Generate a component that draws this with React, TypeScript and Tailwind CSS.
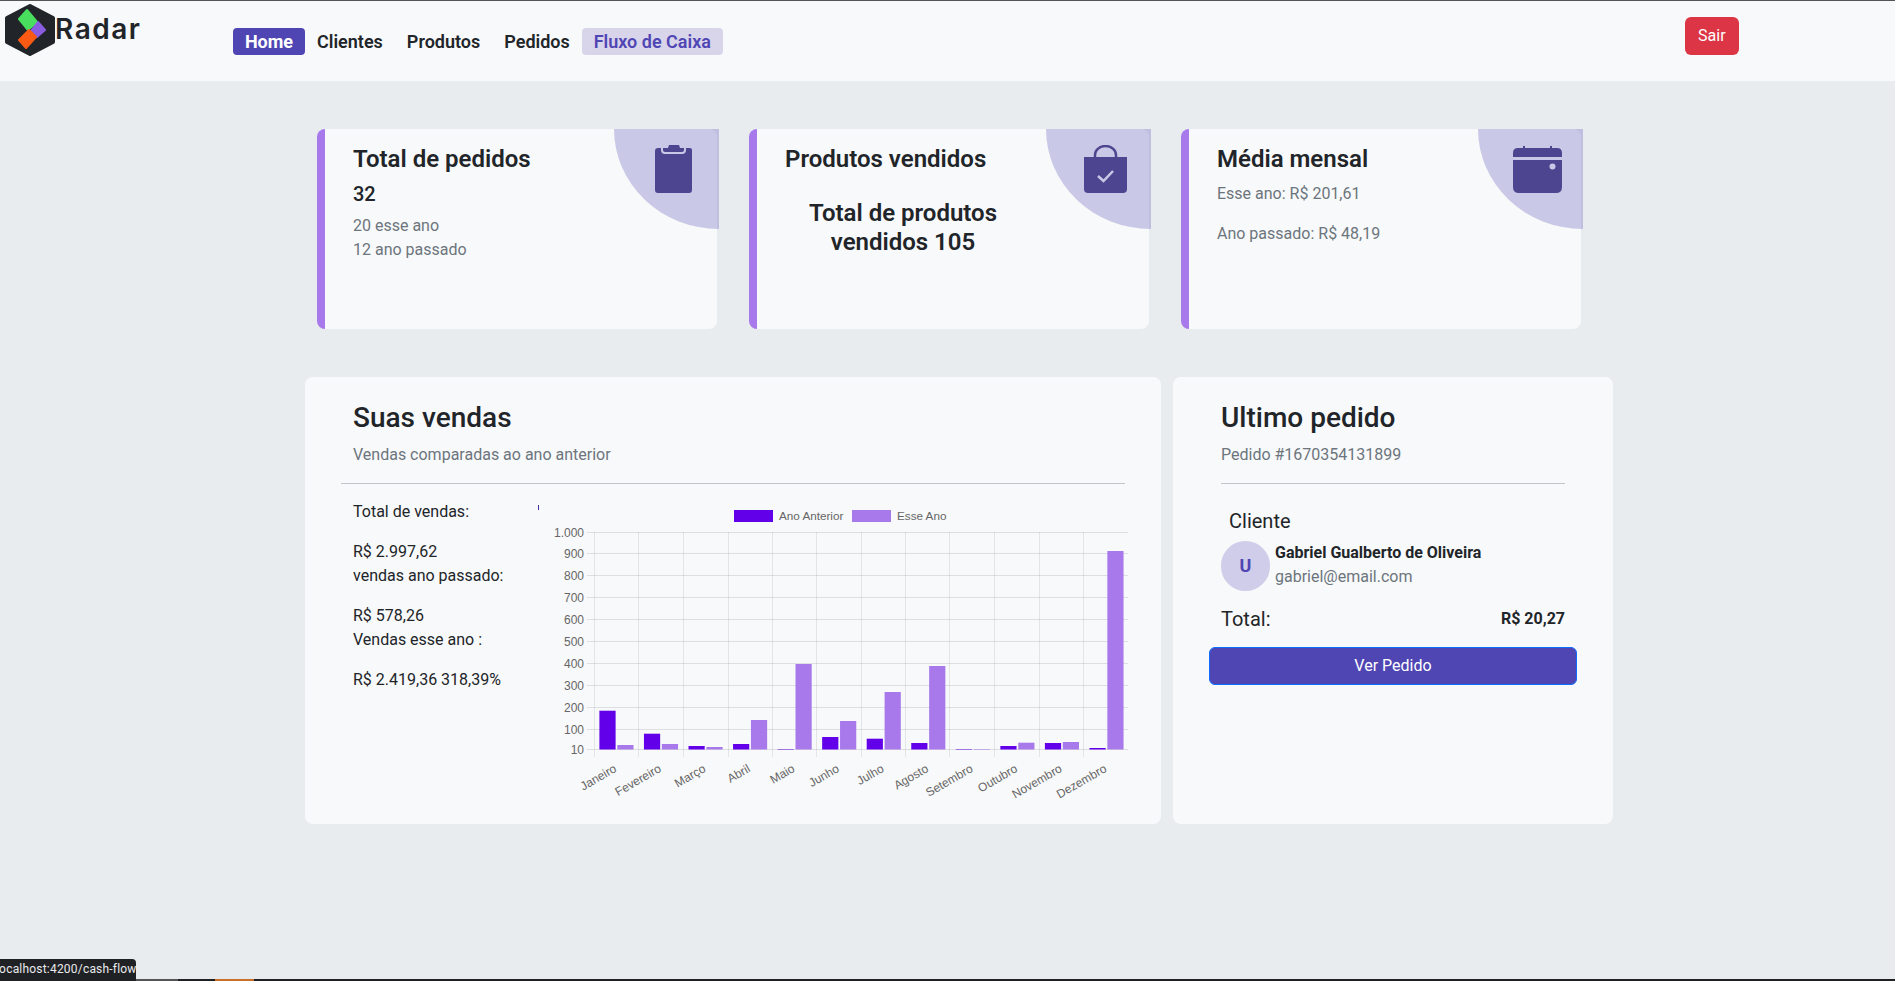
const months = ["Janeiro", "Fevereiro", "Março", "Abril", "Maio", "Junho", "Julho", "Agosto", "Setembro", "Outubro", "Novembro", "Dezembro"];
// top of each bar, in screenshot pixels
const lastYear = [710.7, 733.7, 746, 744, 749, 737, 738.7, 743, 749, 746, 743, 748];
const thisYear = [745, 744, 747, 720, 664, 721, 692, 666, 749, 742.7, 742, 551];
const yTicks = [
  { label: "1.000", y: 532.5 },
  { label: "900", y: 553.5 },
  { label: "800", y: 575.5 },
  { label: "700", y: 597.5 },
  { label: "600", y: 619.5 },
  { label: "500", y: 641.5 },
  { label: "400", y: 663.5 },
  { label: "300", y: 685.5 },
  { label: "200", y: 707.5 },
  { label: "100", y: 729.5 },
  { label: "10", y: 749.5 },
];
const xGrid = [594.5, 638.5, 683.5, 728.5, 772.5, 816.5, 861.5, 905.5, 949.5, 994.5, 1039.5, 1083.5];
const barBase = 749.5;

function SalesChart() {
  return (
    <svg viewBox="530 490 610 310" className="w-[610px] h-[310px] shrink-0">
      <rect x="538" y="505" width="1" height="5" fill="#4b2a9e" />
      <rect x="734" y="510" width="39" height="12" fill="#6200ea" />
      <text x="779" y="520" fontSize="11.7" fill="#666" fontFamily="Liberation Sans">Ano Anterior</text>
      <rect x="852" y="510" width="39" height="12" fill="#a779ea" />
      <text x="897" y="520" fontSize="11.7" fill="#666" fontFamily="Liberation Sans">Esse Ano</text>
      {yTicks.map((tick) => (
        <g key={tick.label}>
          <line x1="587" x2="1128" y1={tick.y} y2={tick.y} stroke="#000" strokeOpacity="0.1" />
          <text x="584" y={tick.y + 4.5} textAnchor="end" fontSize="12" fill="#666" fontFamily="Liberation Sans">
            {tick.label}
          </text>
        </g>
      ))}
      {xGrid.map((x) => (
        <line key={x} x1={x} x2={x} y1="532" y2="757" stroke="#000" strokeOpacity="0.08" />
      ))}
      {months.map((month, i) => {
        const start = 599.4 + i * 44.55;
        return (
          <g key={month}>
            <rect x={start} y={lastYear[i]} width="16.2" height={barBase - lastYear[i]} fill="#6200ea" />
            <rect x={start + 17.9} y={thisYear[i]} width="16.2" height={barBase - thisYear[i]} fill="#a779ea" />
            <text
              x={start + 18}
              y={771}
              textAnchor="end"
              fontSize="12"
              fill="#666"
              fontFamily="Liberation Sans"
              transform={`rotate(-30 ${start + 18} 771)`}
            >
              {month}
            </text>
          </g>
        );
      })}
    </svg>
  );
}

function Logo() {
  return (
    <svg viewBox="0 0 60 56" className="w-[60px] h-[56px] shrink-0">
      <path d="M30 4 L53 16 V40 L30 52 L7 40 V16 Z" fill="#212529" stroke="#212529" strokeWidth="4" strokeLinejoin="round" />
      <path d="M19 17 L27 8 L37 20 L28 28 Z" fill="#4ade5f" stroke="#4ade5f" strokeWidth="2" strokeLinejoin="round" />
      <path d="M31 29 L38 20 L45 28 L37 35 Z" fill="#8a5ce0" stroke="#8a5ce0" strokeWidth="2" strokeLinejoin="round" />
      <path d="M19 38 L29 28 L36 35 L26 46 Z" fill="#fb5a14" stroke="#fb5a14" strokeWidth="2" strokeLinejoin="round" />
    </svg>
  );
}

function ClipboardIcon() {
  return (
    <svg viewBox="0 0 37 48" className="w-[37px] h-[48px]">
      <path d="M3 3 H35 Q37 3 37 5 V45 Q37 48 34 48 H3 Q0 48 0 45 V6 Q0 3 3 3 Z" fill="#4e4590" />
      <path d="M7 3 V5 Q7 8 10 8 H27 Q30 8 30 5 V3" fill="none" stroke="#cac8e7" strokeWidth="2" />
      <path d="M10 6 Q10 3 13 3 L14 0 H24 L25 3 Q28 3 28 6 Z" fill="#4e4590" />
    </svg>
  );
}

function BagIcon() {
  return (
    <svg viewBox="0 0 43 48" className="w-[43px] h-[48px]">
      <path d="M11 13 V10 A10.5 9 0 0 1 32 10 V13" fill="none" stroke="#4e4590" strokeWidth="2.5" />
      <path d="M0 12 H43 V44 Q43 48 39 48 H4 Q0 48 0 44 Z" fill="#4e4590" />
      <path d="M14 31 L19.5 36 L29 26" fill="none" stroke="#cac8e7" strokeWidth="2.5" />
    </svg>
  );
}

function CalendarIcon() {
  return (
    <svg viewBox="0 0 49 48" className="w-[49px] h-[48px]">
      <path d="M10 3 V1 H12 V3 H37 V1 H39 V3 H44 Q49 3 49 8 V12 H0 V8 Q0 3 5 3 Z" fill="#4e4590" />
      <path d="M0 15 H49 V42 Q49 48 43 48 H6 Q0 48 0 42 Z" fill="#4e4590" />
      <circle cx="39.5" cy="21.5" r="3" fill="#cac8e7" />
    </svg>
  );
}

function StatCard({ icon, children }: { icon: React.ReactNode; children: React.ReactNode }) {
  return (
    <div className="relative w-[400px] h-[200px] pl-[28px] pt-[16px] bg-[#f8f9fa] rounded-lg border-l-8 border-[#a779eb]">
      <div className="absolute top-0 right-[-2px] w-[105px] h-[100px] rounded-bl-[100%] bg-[#4f46b4]/[.27]" />
      {children}
      {icon}
    </div>
  );
}

function CardTitle({ children }: { children: React.ReactNode }) {
  return <h4 className="text-2xl leading-[29px] font-semibold mb-2 text-[#212529]">{children}</h4>;
}

export default function App() {
  return (
    <div
      className="relative h-screen overflow-hidden bg-[#e9ecef] text-[#212529] text-base"
      style={{ fontFamily: "Roboto, sans-serif" }}
    >
      <header className="h-[81px] bg-[#f8f9fa] border-t border-[#555] flex items-start">
        <div className="flex items-start pl-[0px] pt-[1px] w-[233px]">
          <Logo />
          <span
            className="text-[28px] leading-[40px] font-semibold -ml-[5px] mt-[7px] tracking-[1.5px]"
            style={{ fontFamily: "Inter, sans-serif" }}
          >
            Radar
          </span>
        </div>
        <nav className="flex items-center mt-[27px] h-[27px] text-lg font-semibold">
          <a className="w-[72px] h-[27px] flex items-center justify-center rounded bg-[#4f46b4] text-white font-bold">Home</a>
          <a className="ml-3">Clientes</a>
          <a className="ml-6">Produtos</a>
          <a className="ml-6">Pedidos</a>
          <a className="ml-3 w-[141px] h-[27px] flex items-center justify-center rounded bg-[#d8d5eb] text-[#4f46b4]">Fluxo de Caixa</a>
        </nav>
        <button className="ml-[962px] mt-[16px] w-[54px] h-[38px] rounded-md bg-[#dc3545] text-white">Sair</button>
      </header>

      <main>
        <section className="flex gap-8 pt-12 pl-[317px]">
          <StatCard icon={<div className="absolute top-[16px] right-[25px]"><ClipboardIcon /></div>}>
            <CardTitle>Total de pedidos</CardTitle>
            <h5 className="text-xl leading-6 font-medium mb-2">32</h5>
            <p className="text-[#6c757d] leading-6">20 esse ano</p>
            <p className="text-[#6c757d] leading-6">12 ano passado</p>
          </StatCard>
          <StatCard icon={<div className="absolute top-[16px] right-[22px]"><BagIcon /></div>}>
            <CardTitle>Produtos vendidos</CardTitle>
            <p className="w-[236px] mt-[25px] text-center text-2xl leading-[29px] font-semibold">Total de produtos vendidos 105</p>
          </StatCard>
          <StatCard icon={<div className="absolute top-[16px] right-[19px]"><CalendarIcon /></div>}>
            <CardTitle>Média mensal</CardTitle>
            <p className="text-[#6c757d] leading-6 mb-4">Esse ano: R$ 201,61</p>
            <p className="text-[#6c757d] leading-6">Ano passado: R$ 48,19</p>
          </StatCard>
        </section>

        <section className="flex gap-3 pt-12 pl-[305px]">
          <div className="w-[856px] h-[447px] bg-[#f8f9fa] rounded-lg pt-[24px]">
            <h3 className="pl-12 text-[28px] leading-[34px] font-medium">Suas vendas</h3>
            <p className="pl-12 mt-2 leading-6 text-[#6c757d]">Vendas comparadas ao ano anterior</p>
            <hr className="ml-9 w-[784px] mt-[16px] border-[#c4c5c9]" />
            <div className="flex pl-12 mt-[6px]">
              <div className="w-[177px] pt-[10px] shrink-0 leading-6">
                <p className="mb-4">Total de vendas:</p>
                <p>R$ 2.997,62</p>
                <p className="mb-4">vendas ano passado:</p>
                <p>R$ 578,26</p>
                <p className="mb-4">Vendas esse ano :</p>
                <p>R$ 2.419,36 318,39%</p>
              </div>
              <SalesChart />
            </div>
          </div>

          <div className="w-[440px] h-[447px] bg-[#f8f9fa] rounded-lg pt-[24px]">
            <h3 className="pl-12 text-[28px] leading-[34px] font-medium">Ultimo pedido</h3>
            <p className="pl-12 mt-2 leading-6 text-[#6c757d]">Pedido #1670354131899</p>
            <hr className="ml-12 w-[344px] mt-[16px] border-[#c4c5c9]" />
            <div className="pl-12 pr-12 pt-[25px]">
              <h5 className="pl-2 text-xl leading-6">Cliente</h5>
              <div className="flex gap-[5px] mt-2">
                <div className="w-[49px] h-[50px] rounded-full bg-[#cfcde9] flex items-center justify-center text-lg font-bold text-[#4f46b4]">U</div>
                <div className="leading-6">
                  <p className="font-bold">Gabriel Gualberto de Oliveira</p>
                  <p className="text-[#6c757d]">gabriel@email.com</p>
                </div>
              </div>
              <div className="flex justify-between items-center mt-4">
                <span className="text-xl leading-6">Total:</span>
                <span className="text-base leading-6 font-bold">R$ 20,27</span>
              </div>
            </div>
            <button className="ml-9 mt-4 w-[368px] h-[38px] rounded-md bg-[#4f46b4] border border-[#0d6efd] text-white">Ver Pedido</button>
          </div>
        </section>
      </main>

      <div className="absolute left-0 bottom-[2px] w-[136px] h-[20px] overflow-hidden bg-[#202124] rounded-tr text-[#e8eaed] text-[12px] leading-[20px] whitespace-nowrap">
        <span className="block -ml-[4px] tracking-[0.2px]">localhost:4200/cash-flow</span>
      </div>
      <div className="absolute left-0 right-0 bottom-0 h-[2px] bg-[#202124] flex">
        <div className="ml-[136px] w-[42px] bg-[#555]" />
        <div className="ml-[37px] w-[39px] bg-[#c8702a]" />
      </div>
    </div>
  );
}
